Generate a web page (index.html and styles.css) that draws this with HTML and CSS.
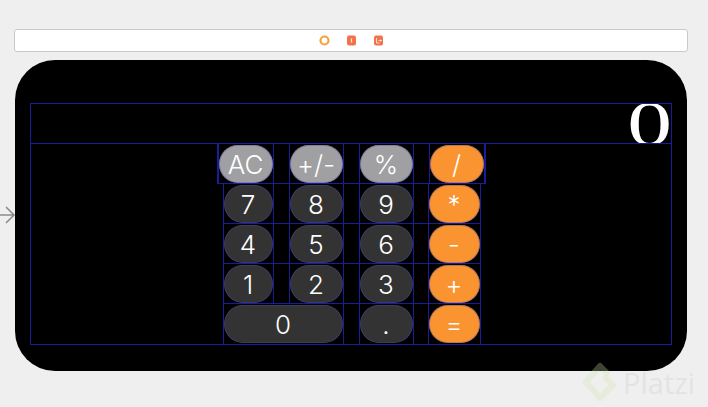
FILE: index.html
```html
<!DOCTYPE html>
<html lang="en">
<head>
  <meta charset="UTF-8">
  <title>Calculator Storyboard</title>
  <link rel="stylesheet" href="styles.css">
</head>
<body>
  <div class="toolbar">
    <svg class="tb-icon" width="11" height="11" viewBox="0 0 11 11">
      <circle cx="5.5" cy="5.5" r="4" fill="none" stroke="#f5a23a" stroke-width="2.2"/>
    </svg>
    <svg class="tb-icon" width="11" height="11" viewBox="0 0 11 11">
      <rect x="1" y="0.5" width="9" height="10" rx="2" fill="#f2734a"/>
      <rect x="4.9" y="3.5" width="1.2" height="4" fill="#fff" opacity="0.8"/>
    </svg>
    <svg class="tb-icon" width="11" height="11" viewBox="0 0 11 11">
      <rect x="1" y="0.5" width="9" height="10" rx="2" fill="#f2734a"/>
      <path d="M3.5 3v5h3M5.5 5.5h3M7.5 4.5l1 1-1 1" fill="none" stroke="#fff" stroke-width="0.9" opacity="0.8"/>
    </svg>
  </div>

  <svg class="entry-arrow" width="16" height="26" viewBox="0 0 16 26">
    <path d="M-2 13H14M6 5l8 8-8 8" fill="none" stroke="#8c8c8c" stroke-width="1.6"/>
  </svg>

  <div class="device">
    <div class="frame">
      <div class="display"><span class="result">0</span></div>
      <div class="keypad">
        <div class="row row-top">
          <div class="cell w56"><button class="key grey">AC</button></div>
          <div class="cell w55"><button class="key grey">+/-</button></div>
          <div class="cell w55"><button class="key grey">%</button></div>
          <div class="cell w56"><button class="key orange">/</button></div>
        </div>
        <div class="row">
          <div class="cell w51"><button class="key dark">7</button></div>
          <div class="cell w55"><button class="key dark">8</button></div>
          <div class="cell w55"><button class="key dark">9</button></div>
          <div class="cell w53 tight"><button class="key orange">*</button></div>
        </div>
        <div class="row">
          <div class="cell w51"><button class="key dark">4</button></div>
          <div class="cell w55"><button class="key dark">5</button></div>
          <div class="cell w55"><button class="key dark">6</button></div>
          <div class="cell w53 tight"><button class="key orange">-</button></div>
        </div>
        <div class="row">
          <div class="cell w51"><button class="key dark">1</button></div>
          <div class="cell w55"><button class="key dark">2</button></div>
          <div class="cell w55"><button class="key dark">3</button></div>
          <div class="cell w53 tight"><button class="key orange">+</button></div>
        </div>
        <div class="row last">
          <div class="cell wide"><button class="key dark">0</button></div>
          <div class="cell w55"><button class="key dark">.</button></div>
          <div class="cell w53 tight"><button class="key orange">=</button></div>
        </div>
      </div>
    </div>
  </div>

  <div class="watermark">
    <svg width="36" height="40" viewBox="0 0 36 40">
      <path d="M25 11 L18 4 L4 20 L18 36 L31 23 L24 16" fill="none" stroke="rgba(206, 230, 166, 0.3)" stroke-width="6" stroke-linejoin="round" stroke-linecap="round"/>
    </svg>
    <span>Platzi</span>
  </div>
</body>
</html>
```

FILE: styles.css
```css
* {
  box-sizing: border-box;
  margin: 0;
  padding: 0;
}

body {
  width: 708px;
  height: 407px;
  overflow: hidden;
  background: #efefef;
  font-family: 'Inter', 'Liberation Sans', sans-serif;
  position: relative;
}

.toolbar {
  margin: 29px 20px 0 14px;
  height: 23px;
  background: #ffffff;
  border: 1px solid #c9c9c9;
  border-radius: 3px;
  display: flex;
  align-items: center;
  justify-content: center;
  gap: 16px;
}

.tb-icon {
  display: block;
}

.entry-arrow {
  position: absolute;
  left: 0;
  top: 202px;
}

.device {
  margin: 8px 21px 0 15px;
  height: 311px;
  background: #000000;
  border-radius: 40px;
  padding: 43px 16px 0 15px;
}

.frame {
  width: 642px;
  border: 1px solid #1c1c96;
}

.display {
  height: 40px;
  border-bottom: 1px solid #1c1c96;
  overflow: hidden;
  text-align: right;
}

.result {
  display: inline-block;
  font-family: 'Liberation Serif', serif;
  font-size: 64px;
  line-height: 39px;
  color: #ffffff;
  transform: scaleX(1.4);
  transform-origin: right center;
  margin-right: -1px;
}

.keypad {
  display: flex;
  flex-direction: column;
  align-items: center;
}

.row {
  height: 40px;
  display: flex;
  gap: 15px;
  border-bottom: 1px solid #1c1c96;
  margin-left: 1px;
}

.row.row-top {
  margin-left: 0;
  border-left: 1px solid #1c1c96;
  border-right: 1px solid #1c1c96;
}

.row.last {
  border-bottom: none;
}

.cell {
  height: 100%;
  border-left: 1px solid #1c1c96;
  border-right: 1px solid #1c1c96;
  padding: 1px 0 1px;
}

.cell.tight {
  margin-left: -1px;
}

.w51 { width: 51px; }
.w53 { width: 53px; }
.w55 { width: 55px; }
.w56 { width: 56px; }
.wide { width: 121px; }

.key {
  display: block;
  width: 100%;
  height: 38px;
  border: none;
  border-radius: 19px;
  font-family: 'Inter', 'Liberation Sans', sans-serif;
  font-size: 26px;
  font-weight: 300;
  color: #ffffff;
  box-shadow: inset 0 0 0 1px rgba(70, 70, 190, 0.4);
}

.key.grey {
  background: #a0a0a2;
}

.key.dark {
  background: #333333;
}

.key.orange {
  background: #fa9430;
}

.watermark {
  position: absolute;
  left: 582px;
  top: 362px;
  display: flex;
  align-items: center;
  gap: 5px;
  color: rgba(197, 197, 197, 0.3);
  font-family: 'Open Sans', sans-serif;
  font-size: 29px;
  font-weight: 500;
}
```
